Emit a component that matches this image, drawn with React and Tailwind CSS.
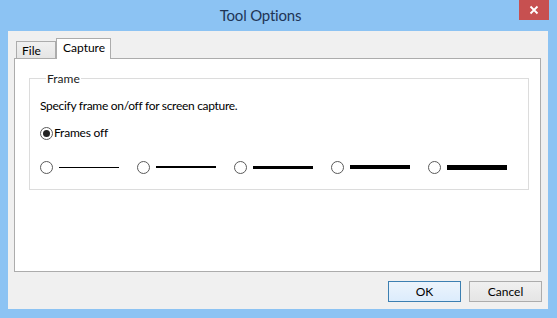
import React from 'react';

const Radio = ({ checked }) => (
  <span className="w-[13px] h-[13px] rounded-full border border-[#5a5a5a] bg-white flex items-center justify-center shrink-0">
    {checked && <span className="w-[7px] h-[7px] rounded-full bg-[#222]"></span>}
  </span>
);

const App = () => {
  const widths = [
    { id: 1, cls: 'h-[1px]' },
    { id: 2, cls: 'h-[2px]' },
    { id: 3, cls: 'h-[3px]' },
    { id: 4, cls: 'h-[4px]' },
    { id: 5, cls: 'h-[5px]' },
  ];

  return (
    <div className="w-[557px] h-[318px] bg-[#8cc3f3] flex flex-col text-[12px] text-black font-['Lato',sans-serif] overflow-hidden">
      {/* Title bar */}
      <div className="relative h-[31px] flex items-center justify-center pr-[36px]">
        <span className="text-[15px] text-[#1f3556] leading-none tracking-[-0.2px]">Tool Options</span>
        <div className="absolute right-[8px] top-0 w-[30px] h-[20px] bg-[#c75050] flex items-center justify-center">
          <svg width="10" height="10" viewBox="0 0 10 10">
            <path d="M1.5 1.5 L8.5 8.5 M8.5 1.5 L1.5 8.5" stroke="white" strokeWidth="1.8" />
          </svg>
        </div>
      </div>

      {/* Client area */}
      <div className="ml-[8px] mr-[9px] mb-[9px] flex-1 bg-[#f0f0f0] flex flex-col">
        <div className="pt-[7px] px-[6px] pr-[7px]">
          {/* Tabs */}
          <div className="flex items-end h-[20px] ml-[2px]">
            <div className="w-[40px] h-[17px] border border-b-0 border-[#acacac] bg-gradient-to-b from-[#f0f0f0] to-[#e5e5e5] px-[5px] leading-[17px]">File</div>
            <div className="relative z-10 -mb-px w-[55px] h-[21px] border border-b-0 border-[#acacac] bg-white px-[6px] leading-[18px]">Capture</div>
          </div>

          {/* Panel */}
          <div className="h-[214px] border border-[#acacac] bg-white pt-[12px] pl-[14px] pr-[11px]">
            <fieldset className="border border-[#dcdcdc] h-[119px] pl-[10px] pt-[12px]">
              <legend className="ml-[6px] px-[1px] leading-[15px] text-[#222]">Frame</legend>
              <div className="leading-[16px] tracking-[-0.3px]">Specify frame on/off for screen capture.</div>
              <div className="flex items-center mt-[11px] h-[16px]">
                <Radio checked />
                <span className="ml-[1px] leading-[16px] tracking-[-0.2px]">Frames off</span>
              </div>
              <div className="flex items-center gap-[18px] mt-[18px] h-[16px]">
                {widths.map((w) => (
                  <div key={w.id} className="flex items-center gap-[6px]">
                    <Radio />
                    <span className={`w-[60px] bg-black ${w.cls}`}></span>
                  </div>
                ))}
              </div>
            </fieldset>
          </div>
        </div>

        {/* Buttons */}
        <div className="flex justify-end gap-[8px] pr-[6px] pt-[9px]">
          <button className="w-[73px] h-[21px] border border-[#3c7fb1] bg-gradient-to-b from-[#ecf4fc] to-[#dcecfc] leading-none">OK</button>
          <button className="w-[73px] h-[21px] border border-[#acacac] bg-gradient-to-b from-[#f0f0f0] to-[#e5e5e5] leading-none">Cancel</button>
        </div>
      </div>
    </div>
  );
};

export default App;
